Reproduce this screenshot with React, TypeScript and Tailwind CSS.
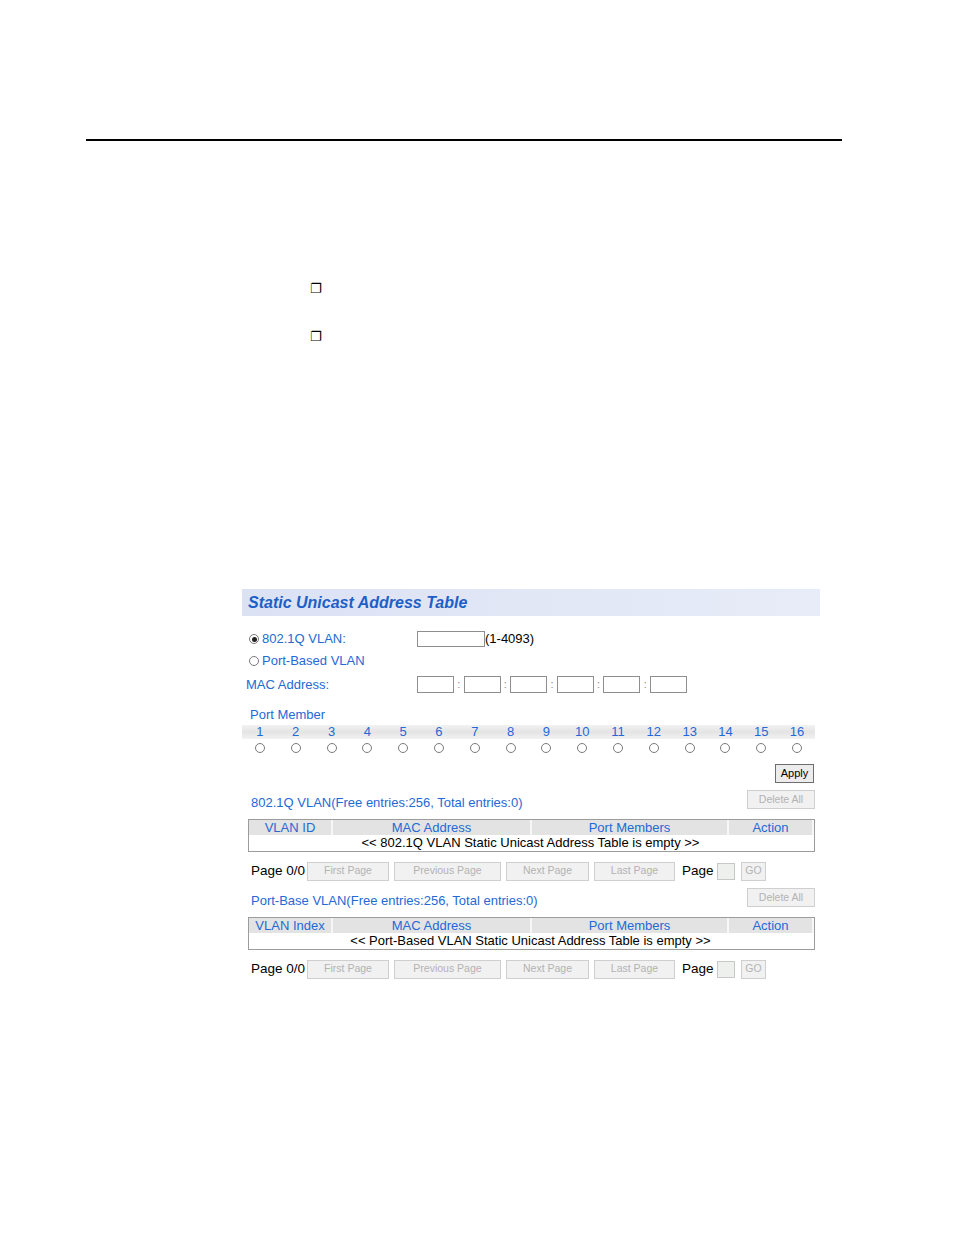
import React from 'react';

const ports = Array.from({ length: 16 }, (_, i) => i + 1);

function Radio({ checked = false }: { checked?: boolean }) {
    return (
        <span className="inline-flex h-[10px] w-[10px] items-center justify-center rounded-full border border-[#7a7a7a] bg-white shrink-0">
            {checked && <span className="h-[5px] w-[5px] rounded-full bg-[#222]"></span>}
        </span>
    );
}

function Box({ w }: { w: string }) {
    return <span className={`inline-block h-[17px] border border-[#8e8e8e] bg-white ${w}`}></span>;
}

function DisabledBtn({ label, w }: { label: string; w: string }) {
    return (
        <span className={`inline-flex h-[19px] items-center justify-center border border-[#cfcfcf] bg-[#f1f1f1] text-[10.5px] text-[#b3b3b3] ${w}`}>
            {label}
        </span>
    );
}

function Pager() {
    return (
        <div className="mt-[10px] flex h-[18px] items-center pl-[9px] text-[13.5px] text-black">
            <span className="w-[56px]">Page 0/0</span>
            <DisabledBtn label="First Page" w="w-[82px]" />
            <span className="w-[5px]"></span>
            <DisabledBtn label="Previous Page" w="w-[107px]" />
            <span className="w-[5px]"></span>
            <DisabledBtn label="Next Page" w="w-[83px]" />
            <span className="w-[5px]"></span>
            <DisabledBtn label="Last Page" w="w-[81px]" />
            <span className="ml-[7px] w-[35px]">Page</span>
            <span className="inline-block h-[17px] w-[18px] border border-[#c8c8c8] bg-[#eef0ee]"></span>
            <span className="w-[6px]"></span>
            <DisabledBtn label="GO" w="w-[25px]" />
        </div>
    );
}

function Table({ first, empty }: { first: string; empty: string }) {
    const head = 'flex h-[15px] items-center justify-center bg-[#e3e3e3] border-r-2 border-[#f7f7f7] text-[13px] text-[#2469d6]';
    return (
        <div className="mt-[10px] ml-[6px] w-[567px] border border-[#9c9c9c]">
            <div className="flex">
                <div className={`${head} w-[84px]`}>{first}</div>
                <div className={`${head} w-[199px]`}>MAC Address</div>
                <div className={`${head} w-[197px]`}>Port Members</div>
                <div className={`${head} flex-1 border-r-0`}>Action</div>
            </div>
            <div className="flex h-[16px] items-center justify-center pr-[2px] text-[13px] text-black">{empty}</div>
        </div>
    );
}

export default function App() {
    return (
        <div className="h-[1235px] w-[954px] bg-white pt-[139px] font-['Liberation_Sans',Arial,sans-serif]">
            <div className="ml-[86px] h-[2px] w-[756px] bg-black"></div>

            <div className="mt-[141px] pl-[310px] font-['DejaVu_Sans',sans-serif] text-[13px] leading-[14px] text-black">
                <div>❐</div>
                <div className="mt-[34px]">❐</div>
            </div>

            <div className="ml-[242px] mt-[245px] w-[578px]">
                <div className="flex h-[27px] items-center bg-gradient-to-r from-[#dbe2f4] via-[#e2e7f6] to-[#e8ecf8] pl-[6px]">
                    <span className="text-[16px] font-bold italic text-[#1d5fc6]">Static Unicast Address Table</span>
                </div>

                <div className="mt-[15px] flex h-[16px] items-center text-[13px]">
                    <div className="flex w-[175px] items-center gap-[3px] pl-[7px] text-[#2469d6]">
                        <Radio checked />
                        <span>802.1Q VLAN:</span>
                    </div>
                    <span className="inline-block h-[16px] w-[68px] border border-[#8e8e8e] bg-white"></span>
                    <span className="text-black">(1-4093)</span>
                </div>

                <div className="mt-[6px] flex h-[16px] items-center gap-[3px] pl-[7px] text-[13px] text-[#2469d6]">
                    <Radio />
                    <span>Port-Based VLAN</span>
                </div>

                <div className="mt-[7px] flex h-[17px] items-center text-[13px]">
                    <div className="w-[175px] pl-[4px] text-[#2469d6]">MAC Address:</div>
                    {[0, 1, 2, 3, 4, 5].map((i) => (
                        <span key={i} className="flex items-center">
                            {i > 0 && <span className="w-[9.6px] text-center text-[11px] text-[#888]">:</span>}
                            <Box w="w-[37px]" />
                        </span>
                    ))}
                </div>

                <div className="mt-[15px] h-[14px] pl-[8px] text-[13px] leading-[14px] text-[#2469d6]">Port Member</div>

                <div className="mt-[3px] grid h-[14px] w-[573px] grid-cols-16 bg-gradient-to-b from-[#f2f2f2] via-[#e4e4e4] to-[#f2f2f2] text-[13px] leading-[14px] text-[#2469d6]">
                    {ports.map((p) => (
                        <span key={p} className="text-center">{p}</span>
                    ))}
                </div>
                <div className="mt-[4px] grid w-[573px] grid-cols-16">
                    {ports.map((p) => (
                        <span key={p} className="flex justify-center">
                            <Radio />
                        </span>
                    ))}
                </div>

                <div className="mt-[11px] flex w-[573px] justify-end pr-[1px]">
                    <span className="inline-flex h-[19px] w-[39px] items-center justify-center border border-[#6e6e6e] bg-[#ececec] text-[11px] text-black">Apply</span>
                </div>

                <div className="mt-[7px] flex h-[19px] w-[573px] items-center justify-between pl-[9px]">
                    <span className="pt-[7px] text-[13px] text-[#2469d6]">802.1Q VLAN(Free entries:256, Total entries:0)</span>
                    <DisabledBtn label="Delete All" w="w-[68px]" />
                </div>
                <Table first="VLAN ID" empty="<< 802.1Q VLAN Static Unicast Address Table is empty >>" />
                <Pager />

                <div className="mt-[8px] flex h-[19px] w-[573px] items-center justify-between pl-[9px]">
                    <span className="pt-[7px] text-[13px] text-[#2469d6]">Port-Base VLAN(Free entries:256, Total entries:0)</span>
                    <DisabledBtn label="Delete All" w="w-[68px]" />
                </div>
                <Table first="VLAN Index" empty="<< Port-Based VLAN Static Unicast Address Table is empty >>" />
                <Pager />
            </div>
        </div>
    );
}
